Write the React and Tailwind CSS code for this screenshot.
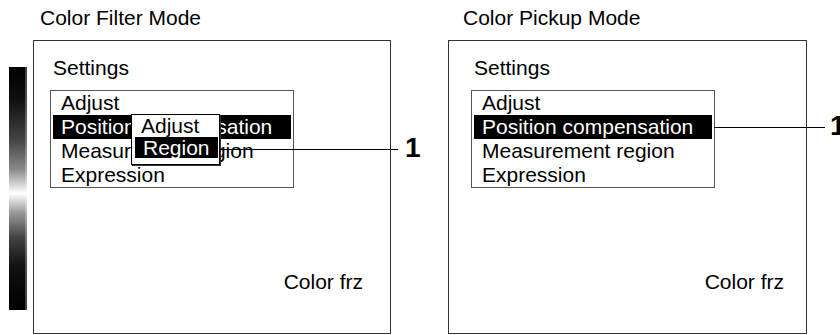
import React from 'react';

const rows = ['Adjust', 'Position compensation', 'Measurement region', 'Expression'];

function Menu({ selected }) {
  return (
    <div className="w-[244px] border border-[#555] bg-white">
      {rows.map((r, i) => (
        <div key={r}
          className={i === selected
            ? 'mx-[2px] h-[24px] pl-[8px] leading-[24px] whitespace-nowrap bg-black text-white'
            : 'mx-[2px] h-[24px] pl-[8px] leading-[24px] whitespace-nowrap text-black'}>
          {r}
        </div>
      ))}
    </div>
  );
}

function Panel({ title, titlePad, children, menuPad, frzPad }) {
  return (
    <div className="flex flex-col">
      <div className={`h-[40px] pt-[6px] leading-[24px] ${titlePad}`}>{title}</div>
      <div className="relative flex h-[294px] flex-col border border-[#333] bg-white">
        <div className={`pt-[15px] ${menuPad}`}>
          <div className="pl-[3px] leading-[24px]">Settings</div>
          <div className="mt-[10px]">{children}</div>
        </div>
        <div className={`mt-auto self-end pb-[39px] leading-[24px] ${frzPad}`}>Color frz</div>
      </div>
    </div>
  );
}

export default function App() {
  return (
    <div className="relative flex h-[335px] w-[840px] overflow-hidden bg-white font-['Liberation_Sans',Arial,sans-serif] text-[21px] text-black">
      {/* colour scale bar */}
      <div className="w-[33px] pl-[9px] pt-[67px]">
        <div className="flex h-[243px] w-[18px] bg-[linear-gradient(to_bottom,#000_0%,#111_14%,#444_30%,#888_42%,#fff_52%,#999_60%,#444_70%,#111_82%,#000_100%)]">
          <div className="flex-1" />
          <div className="w-[2px] bg-white/25" />
        </div>
      </div>

      <div className="w-[358px]">
        <Panel title="Color Filter Mode" titlePad="pl-[7px]" menuPad="pl-[16px]" frzPad="pr-[27px]">
          <Menu selected={1} />
        </Panel>
      </div>

      <div className="ml-[57px] w-[359px]">
        <Panel title="Color Pickup Mode" titlePad="pl-[15px]" menuPad="pl-[22px]" frzPad="pr-[22px]">
          <Menu selected={1} />
        </Panel>
      </div>

      {/* sub menu popup over the left list */}
      <div className="absolute left-[131px] top-[114px] h-[51px] w-[89px] border border-black bg-white shadow-[1px_1px_0_#333]">
        <div className="h-[22px] pl-[9px] leading-[22px]">Adjust</div>
        <div className="ml-[3px] mr-[1px] h-[21px] bg-black pl-[8px] leading-[21px] text-white">Region</div>
      </div>

      {/* callouts */}
      <div className="absolute left-[220px] top-[149px] h-px w-[178px] bg-black" />
      <div className="absolute left-[405px] top-[134px] text-[28px] font-bold leading-[28px]">1</div>
      <div className="absolute left-[714px] top-[127px] h-px w-[111px] bg-black" />
      <div className="absolute left-[830px] top-[112px] text-[28px] font-bold leading-[28px]">1</div>
    </div>
  );
}
